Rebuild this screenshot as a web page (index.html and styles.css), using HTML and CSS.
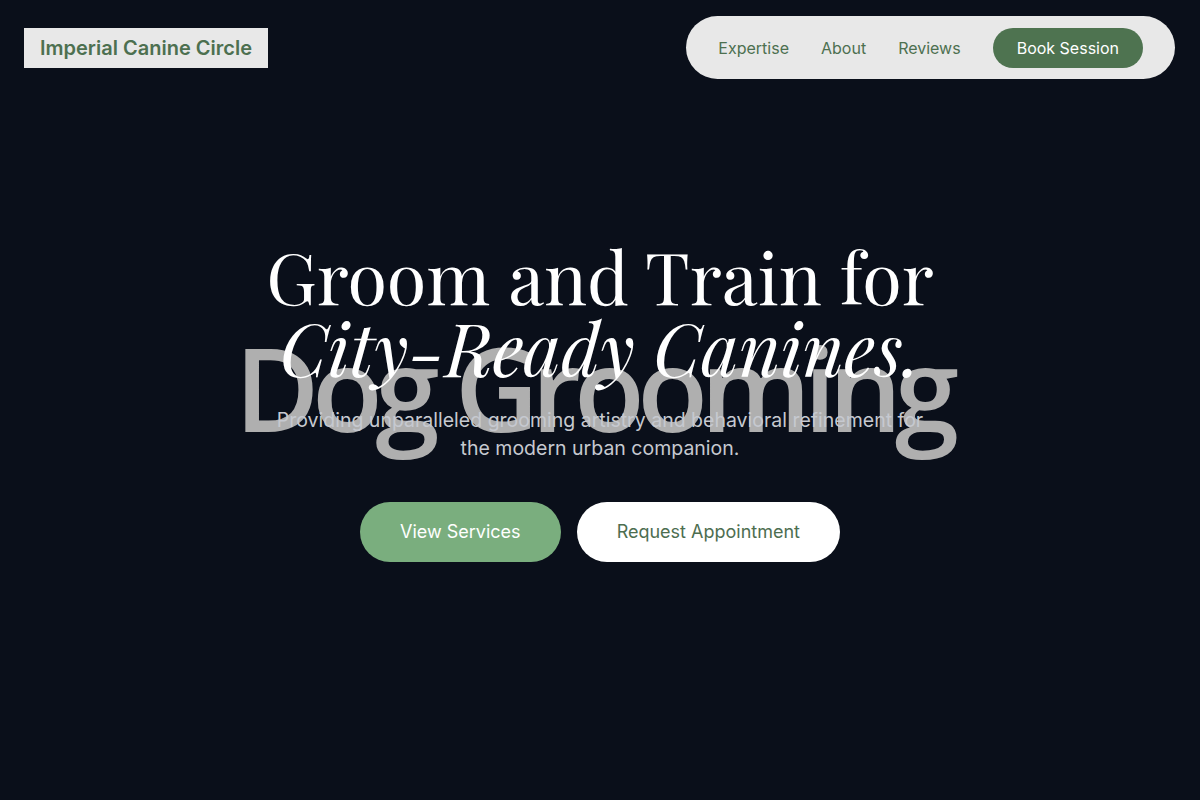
FILE: index.html
```html
<!DOCTYPE html>
<html lang="en">
<head>
<meta charset="utf-8">
<title>Imperial Canine Circle</title>
<link rel="stylesheet" href="styles.css">
</head>
<body>
<header class="site-header">
  <a class="logo" href="#">Imperial Canine Circle</a>
  <nav class="nav-pill">
    <a class="nav-link" href="#">Expertise</a>
    <a class="nav-link" href="#">About</a>
    <a class="nav-link" href="#">Reviews</a>
    <a class="nav-cta" href="#">Book Session</a>
  </nav>
</header>
<main class="hero">
  <div class="hero-watermark" aria-hidden="true">Dog Grooming</div>
  <div class="hero-content">
    <h1 class="hero-title">Groom and Train for<br><em>City-Ready Canines.</em></h1>
    <p class="hero-sub">Providing unparalleled grooming artistry and behavioral refinement for the modern urban companion.</p>
    <div class="hero-actions">
      <a class="btn btn-primary" href="#">View Services</a>
      <a class="btn btn-light" href="#">Request Appointment</a>
    </div>
  </div>
</main>
</body>
</html>
```
FILE: styles.css
```css
* { box-sizing: border-box; }
html, body { margin: 0; padding: 0; }
body {
  background: #0a0f1a;
  font-family: Inter, "Liberation Sans", sans-serif;
  color: #fff;
  min-height: 100vh;
}
a { text-decoration: none; }

.site-header {
  position: fixed;
  top: 0;
  left: 0;
  right: 0;
  z-index: 10;
  display: flex;
  justify-content: space-between;
  align-items: center;
  padding: 16px 25px 0 24px;
}
.logo {
  display: block;
  background: #e8e8e8;
  color: #4d7050;
  font-weight: 600;
  font-size: 20px;
  line-height: 24px;
  padding: 8px 16px;
}
.nav-pill {
  display: flex;
  align-items: center;
  gap: 32px;
  background: #e8e8e8;
  border-radius: 32px;
  padding: 12px 32px 11px 32px;
}
.nav-link {
  color: #4d7050;
  font-size: 16px;
  line-height: 24px;
}
.nav-cta {
  display: block;
  background: #4e7350;
  color: #fff;
  font-size: 16px;
  line-height: 40px;
  height: 40px;
  padding: 0 24px;
  border-radius: 20px;
}

.hero {
  position: relative;
  min-height: 100vh;
  display: flex;
  align-items: center;
  justify-content: center;
  overflow: hidden;
}
.hero-watermark {
  position: absolute;
  left: 0;
  right: 14px;
  top: 317px;
  text-align: center;
  font-family: "Open Sans", "Noto Sans", sans-serif;
  font-weight: 650;
  font-size: 116px;
  line-height: 140px;
  letter-spacing: -7.5px;
  color: #afafaf;
  z-index: 0;
  white-space: nowrap;
}
.hero-content {
  position: relative;
  z-index: 1;
  display: flex;
  flex-direction: column;
  align-items: center;
  text-align: center;
  max-width: 700px;
}
.hero-title {
  margin: 0 0 23px;
  font-family: "Playfair Display", "Liberation Serif", serif;
  font-weight: 400;
  font-size: 72px;
  line-height: 72px;
  color: #fff;
  white-space: nowrap;
}
.hero-title em {
  font-style: italic;
}
.hero-sub {
  margin: 0 0 40px;
  font-size: 19.5px;
  line-height: 28px;
  color: #c6c9d0;
  max-width: 680px;
}
.hero-actions {
  display: flex;
  gap: 16px;
}
.btn {
  display: block;
  height: 60px;
  line-height: 60px;
  padding: 0 40px;
  border-radius: 30px;
  font-size: 18px;
}
.btn-primary {
  background: #7aae7e;
  color: #fff;
}
.btn-light {
  background: #fff;
  color: #4d6e50;
}
```
